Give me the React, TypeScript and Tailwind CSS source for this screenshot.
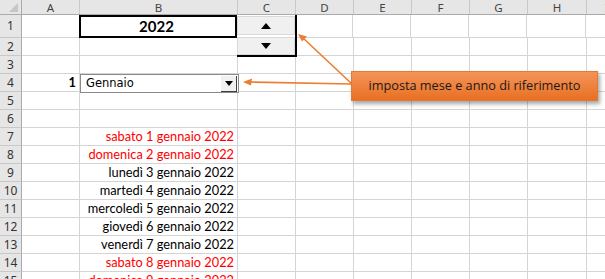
import React from "react";

const cols = ["A", "B", "C", "D", "E", "F", "G", "H", "I"];
const colW = [58, 158, 58, 58, 58, 58, 58, 59, 40];

type Row = { n: number; a?: React.ReactNode; b?: React.ReactNode; h: number };

const dates: [string, boolean][] = [
  ["sabato 1 gennaio 2022", true],
  ["domenica 2 gennaio 2022", true],
  ["lunedì 3 gennaio 2022", false],
  ["martedì 4 gennaio 2022", false],
  ["mercoledì 5 gennaio 2022", false],
  ["giovedì 6 gennaio 2022", false],
  ["venerdì 7 gennaio 2022", false],
  ["sabato 8 gennaio 2022", true],
  ["domenica 9 gennaio 2022", true],
];

const cellFont = { fontFamily: "Lato, 'Noto Sans', sans-serif" };

function SpinButtons() {
  return (
    <div className="absolute left-[237px] top-[15px] w-[60px] h-[42px] flex flex-col gap-[2px] pt-[1px] border-r-2 border-b-2 border-black bg-white">
      <div className="h-[19px] bg-[#f0f0f0] border border-[#d9d9d9] flex items-center justify-center">
        <div className="w-0 h-0 border-l-[5px] border-r-[5px] border-b-[6px] border-l-transparent border-r-transparent border-b-black" />
      </div>
      <div className="h-[18px] bg-[#f0f0f0] border border-[#d9d9d9] flex items-center justify-center">
        <div className="w-0 h-0 border-l-[5px] border-r-[5px] border-t-[6px] border-l-transparent border-r-transparent border-t-black" />
      </div>
    </div>
  );
}

function Combo() {
  return (
    <div className="absolute left-[80px] top-[74px] w-[159px] h-[19px] bg-white border border-[#8a8a8a] flex items-center">
      <span className="pl-[5px] text-[11.5px] text-black flex-1" style={{ fontFamily: "'DejaVu Sans', sans-serif" }}>
        Gennaio
      </span>
      <div className="w-[16px] h-[16px] mr-[1px] bg-[#f0f0f0] border-r border-b border-[#404040] flex items-center justify-center">
        <div className="w-0 h-0 border-l-[4px] border-r-[4px] border-t-[5px] border-l-transparent border-r-transparent border-t-black" />
      </div>
    </div>
  );
}

function Callout() {
  return (
    <div
      className="absolute left-[351px] top-[71px] w-[247px] h-[30px] flex items-center justify-center bg-gradient-to-b from-[#f59356] to-[#e8701f] border border-[#e07a34] shadow-[2px_3px_4px_rgba(0,0,0,0.35)] text-[12.7px] text-[#1a1a1a] whitespace-nowrap"
      style={{ fontFamily: "'Open Sans', 'Noto Sans', sans-serif" }}
    >
      imposta mese e anno di riferimento
    </div>
  );
}

function Arrows() {
  return (
    <svg className="absolute left-0 top-0 pointer-events-none" width={605} height={279}>
      <g stroke="#ed7d31" strokeWidth={1.6} fill="#ed7d31">
        <line x1={352} y1={84} x2={249} y2={82} />
        <polygon points="243,82 252,78.5 251,85.5" stroke="none" />
        <line x1={352} y1={84} x2={303} y2={38} />
        <polygon points="298,34 307,36.5 302,41.5" stroke="none" />
      </g>
    </svg>
  );
}

export default function App() {
  const rows: Row[] = [
    { n: 1, h: 23 },
    { n: 2, h: 18 },
    { n: 3, h: 18 },
    { n: 4, h: 18, a: <span className="font-bold">1</span> },
    { n: 5, h: 18 },
    { n: 6, h: 18 },
    ...dates.map(([t, red], i) => ({
      n: 7 + i,
      h: 18,
      b: <span className={red ? "text-[#ff0000]" : "text-black"}>{t}</span>,
    })),
  ];

  return (
    <div className="relative w-[605px] h-[279px] overflow-hidden bg-white select-none">
      {/* column headers */}
      <div className="flex h-[15px] bg-[#e6e6e6] border-b border-[#ababab]">
        <div className="w-[22px] shrink-0 border-r border-[#ababab] relative">
          <div className="absolute right-[3px] bottom-[2px] w-0 h-0 border-b-[9px] border-l-[9px] border-b-[#c6c6c6] border-l-transparent" />
        </div>
        {cols.map((c, i) => (
          <div
            key={c}
            style={{ width: colW[i], fontFamily: "'Noto Sans', sans-serif" }}
            className="shrink-0 border-r border-[#c8c8c8] text-[11.5px] leading-[15px] text-[#444] text-center"
          >
            {c}
          </div>
        ))}
      </div>

      {/* body rows */}
      {rows.map((r) => (
        <div key={r.n} className="flex" style={{ height: r.h }}>
          <div
            className="w-[22px] shrink-0 bg-[#e6e6e6] border-r border-[#ababab] border-b border-b-[#c8c8c8] text-[12px] text-[#333] flex items-center justify-center"
            style={{ fontFamily: "'Noto Sans', sans-serif" }}
          >
            {r.n}
          </div>
          {cols.map((c, i) => (
            <div
              key={c}
              style={{ width: colW[i], ...cellFont }}
              className={
                "shrink-0 border-r border-b border-[#d4d4d4] text-[12.8px] whitespace-nowrap overflow-hidden flex items-center justify-end pr-[3px] " +
                (r.n === 1 && c === "B" ? "!border-2 !border-black !justify-center font-bold text-[15px] -ml-[1px] " : "")
              }
            >
              {r.n === 1 && c === "B" ? "2022" : c === "A" ? r.a : c === "B" ? r.b : null}
            </div>
          ))}
        </div>
      ))}

      <SpinButtons />
      <Combo />
      <Arrows />
      <Callout />
    </div>
  );
}
